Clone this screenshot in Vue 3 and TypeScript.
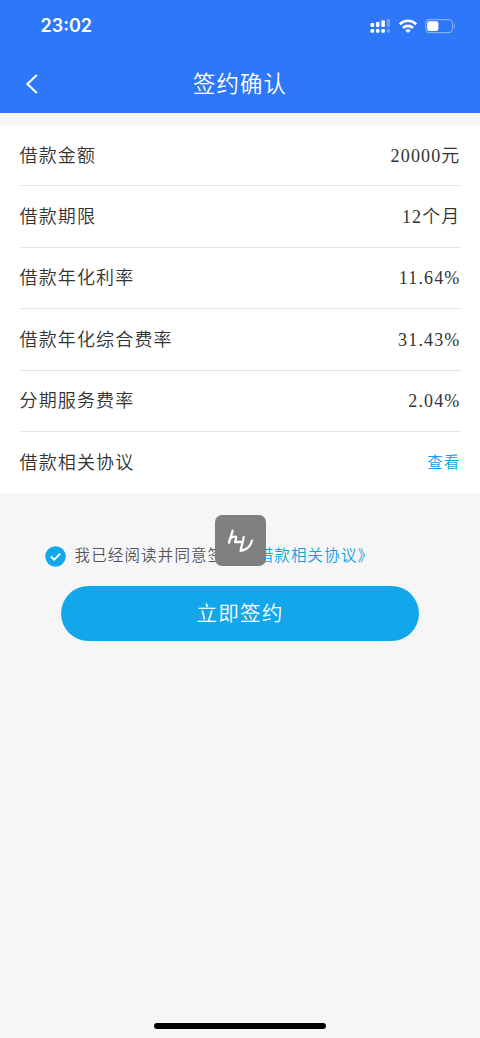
<script setup lang="ts">
interface Row {
  label: string
  value: string
  link?: boolean
}

const rows: Row[] = [
  { label: '借款金额', value: '20000元' },
  { label: '借款期限', value: '12个月' },
  { label: '借款年化利率', value: '11.64%' },
  { label: '借款年化综合费率', value: '31.43%' },
  { label: '分期服务费率', value: '2.04%' },
  { label: '借款相关协议', value: '查看', link: true },
]
</script>

<template>
  <div class="screen">
    <header class="header">
      <div class="status">
        <span class="time">23:02</span>
        <div class="indicators">
          <svg class="signal" width="21" height="16" viewBox="0 0 21 16" fill="#fff">
            <rect x="0.5" y="5" width="3.6" height="4" rx="1" />
            <rect x="5.9" y="4" width="3.6" height="5" rx="1" />
            <rect x="11.3" y="2.2" width="3.6" height="6.8" rx="1" />
            <rect x="16.7" y="1" width="3.4" height="8" rx="1" opacity="0.3" />
            <rect x="0.5" y="11" width="3.6" height="3.8" rx="1.2" />
            <rect x="5.9" y="11" width="3.6" height="3.8" rx="1.2" />
            <rect x="11.3" y="11" width="3.6" height="3.8" rx="1.2" />
            <rect x="16.7" y="11" width="3.4" height="3.8" rx="1.2" opacity="0.3" />
          </svg>
          <svg class="wifi" width="20" height="16" viewBox="0 0 20 16" fill="none" stroke="#fff" stroke-width="2.7">
            <path d="M1.8 6.2C6.4 1.6 13.6 1.6 18.2 6.2" />
            <path d="M5 9.9C7.8 7.1 12.2 7.1 15 9.9" />
            <path d="M10 15L7.2 12.2C8.8 10.8 11.2 10.8 12.8 12.2Z" fill="#fff" stroke="none" />
          </svg>
          <svg class="battery" width="31" height="16" viewBox="0 0 31 16">
            <rect x="0.7" y="1.6" width="26.8" height="13" rx="3.8" fill="none" stroke="#fff" stroke-opacity="0.42" stroke-width="1.1" />
            <rect x="2.2" y="3.2" width="11.2" height="9.8" rx="2.2" fill="#fff" />
            <path d="M28.8 6V10.4C30.4 9.6 30.4 6.8 28.8 6Z" fill="#fff" opacity="0.45" />
          </svg>
        </div>
      </div>
      <nav class="nav">
        <svg class="back" width="14" height="22" viewBox="0 0 14 22" fill="none" stroke="#fff" stroke-width="2.1">
          <path d="M11.8 2L2.4 11L11.8 20" />
        </svg>
        <h1 class="title">签约确认</h1>
      </nav>
    </header>

    <main>
      <section class="details">
        <div v-for="row in rows" :key="row.label" class="row">
          <span class="label">{{ row.label }}</span>
          <span :class="row.link ? 'view' : 'value'">{{ row.value }}</span>
        </div>
      </section>

      <div class="agreement">
        <svg class="check" width="21" height="21" viewBox="0 0 21 21">
          <circle cx="10.5" cy="10.5" r="10.3" fill="#12a6eb" />
          <path d="M5.8 10.5L9.2 13.7L15.2 7.6" fill="none" stroke="#fff" stroke-width="2" />
        </svg>
        <p class="consent">我已经阅读并同意签约<span class="terms">《借款相关协议》</span></p>
        <div class="floating">
          <svg width="51" height="51" viewBox="0 0 51 51" fill="none" stroke="#fff" stroke-width="2.3" stroke-linecap="round" stroke-linejoin="round">
            <path d="M17.6 15.8L14 27.6M14.9 23.8C16.6 21.8 21.6 20.4 21.2 22.8L20.1 27H26" />
            <path d="M28.8 22L25.6 35.8C31.2 35.2 35.8 31.4 37 25.6" />
          </svg>
        </div>
      </div>

      <button class="submit">立即签约</button>
    </main>
    <div class="home-indicator"></div>
  </div>
</template>

<style>
body {
  margin: 0;
}
</style>

<style scoped>
.screen {
  box-sizing: border-box;
  width: 480px;
  height: 1038px;
  display: flex;
  flex-direction: column;
  overflow: hidden;
  background: #f6f6f6;
  color: #333;
  font-family: "Liberation Serif", "Noto Sans CJK SC", serif;
  font-weight: 350;
  letter-spacing: 1.15px;
}

.header {
  height: 112.5px;
  flex: none;
  background: #2e77f8;
  color: #fff;
}

.status {
  height: 54px;
  box-sizing: border-box;
  padding: 0 24px 2px 40.5px;
  display: flex;
  align-items: center;
  justify-content: space-between;
}

.time {
  font: 600 18px/24px Inter, sans-serif;
  letter-spacing: 0;
}

.indicators {
  display: flex;
  align-items: center;
}

.wifi {
  margin-left: 7px;
}

.battery {
  margin-left: 7px;
}

.nav {
  height: 60px;
  display: grid;
  grid-template-columns: 60px 1fr 60px;
  align-items: center;
}

.back {
  margin-left: 25px;
}

.title {
  margin: 0;
  padding-top: 2px;
  font-size: 22.4px;
  font-weight: 350;
  line-height: 32px;
  text-align: center;
}

.details {
  margin-top: 12.5px;
  padding: 0 19.5px;
  background: #fff;
}

.row {
  box-sizing: border-box;
  height: 61.4px;
  display: flex;
  align-items: center;
  justify-content: space-between;
  border-bottom: 1px solid #e3e3e3;
  font-size: 18px;
  line-height: 26px;
}

.row:last-child {
  border-bottom: 0;
}

.label,
.value {
  padding-top: 1px;
}

.row:last-child .label {
  padding-top: 0;
}

.view {
  padding-top: 1px;
  color: #12a0e2;
  font-size: 15.5px;
}

.agreement {
  position: relative;
  display: flex;
  align-items: center;
  height: 24px;
  margin-top: 51px;
  padding-left: 44.5px;
}

.consent {
  margin: 0 0 0 9px;
  color: #55555f;
  font-size: 15.5px;
  line-height: 24px;
  white-space: nowrap;
}

.terms {
  color: #12a0e2;
}

.floating {
  position: absolute;
  left: 214.5px;
  top: -29px;
  width: 51px;
  height: 51px;
  border-radius: 7px;
  background: #808080;
}

.floating svg {
  display: block;
}

.submit {
  display: block;
  width: 358px;
  height: 55px;
  margin: 17.5px auto 0;
  padding: 1px 0 0;
  border: 0;
  border-radius: 28px;
  background: #12a6eb;
  color: #fff;
  font-family: inherit;
  font-size: 20.6px;
  font-weight: 350;
  line-height: 30px;
  letter-spacing: 1.15px;
}

.home-indicator {
  width: 172px;
  height: 6px;
  margin: auto auto 9.5px;
  border-radius: 3px;
  background: #000;
}
</style>
